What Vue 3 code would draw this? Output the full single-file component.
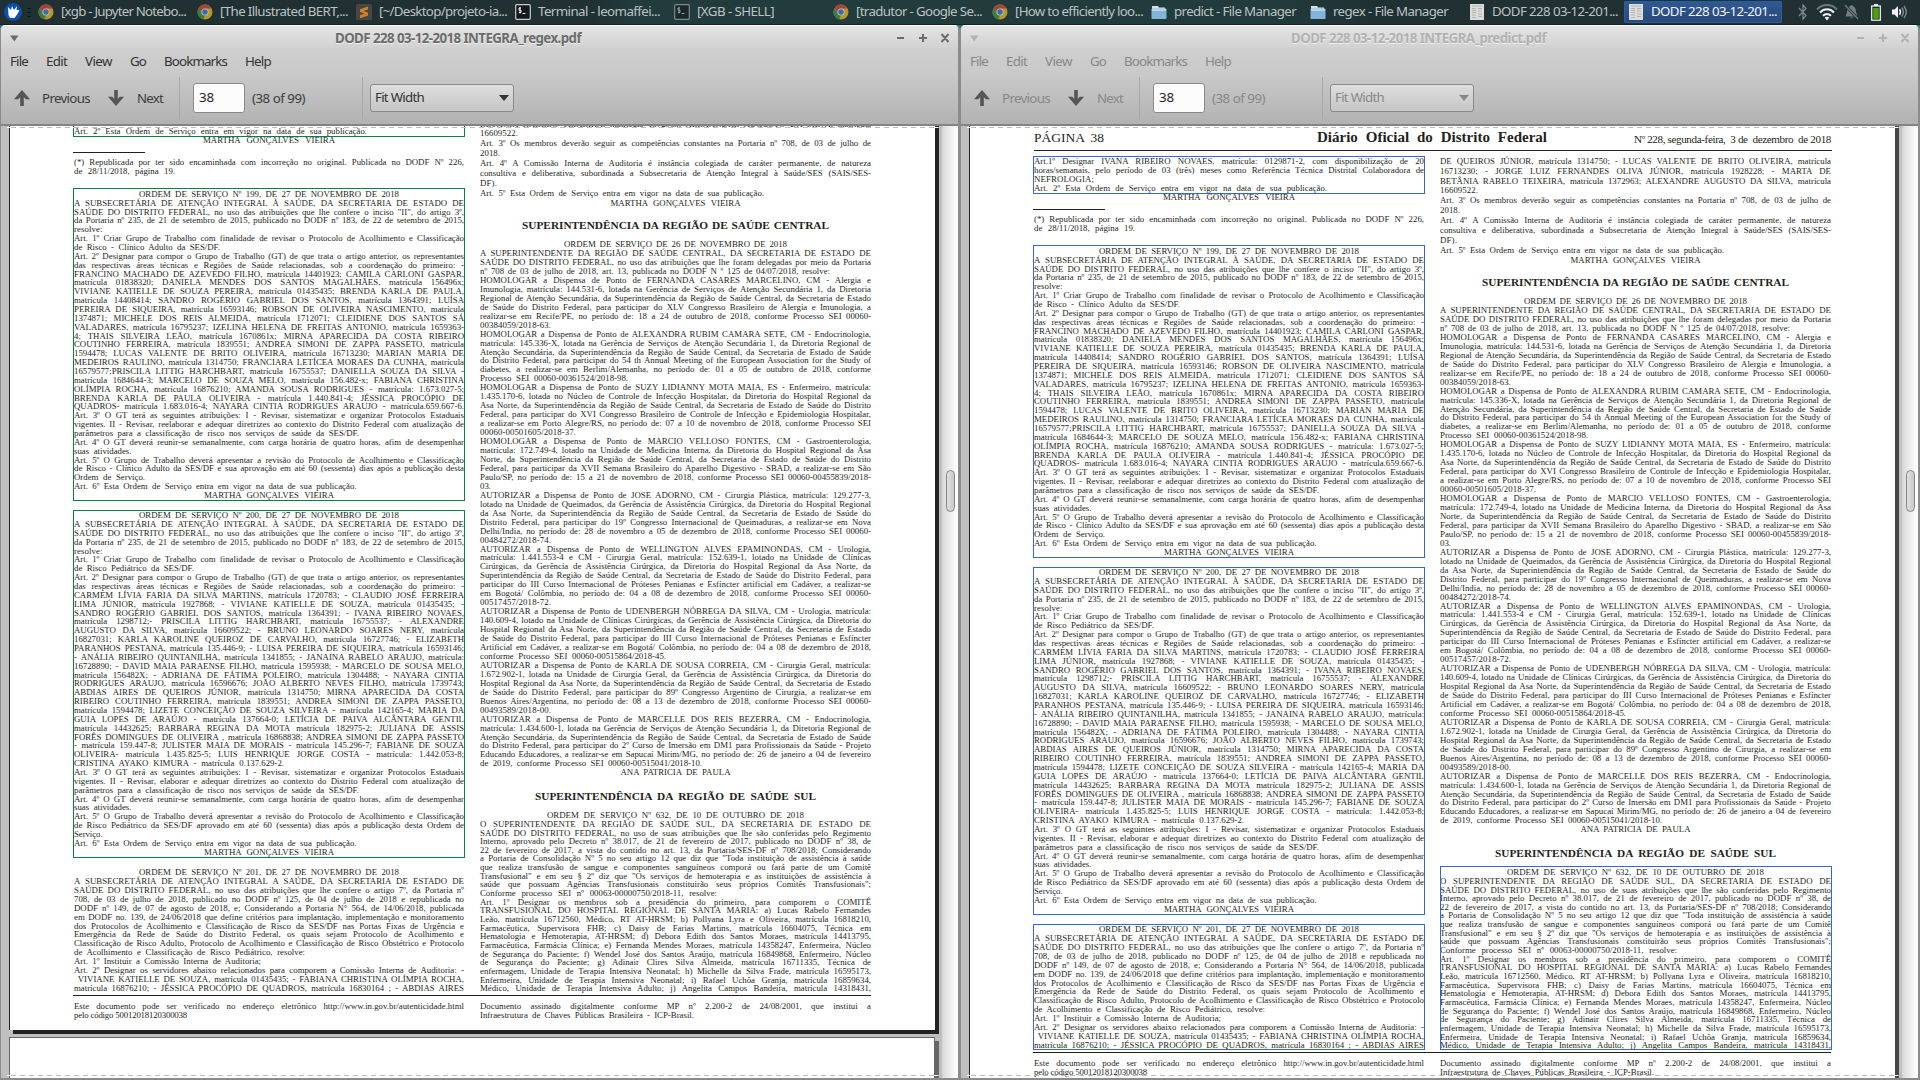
<script setup>
const tasks = [
  { icon: 'chrome', label: '[xgb - Jupyter Notebo...', w: 125 },
  { icon: 'chrome', label: '[The Illustrated BERT,...', w: 128 },
  { icon: 'sublime', label: '[~/Desktop/projeto-ia...', w: 128 },
  { icon: 'term', label: 'Terminal - leomaffei...', w: 122 },
  { icon: 'termdim', label: '[XGB - SHELL]', w: 77 },
  { icon: 'chrome', label: '[tradutor - Google Se...', w: 126 },
  { icon: 'chrome', label: '[How to efficiently loo...', w: 128 },
  { icon: 'folder', label: 'predict - File Manager', w: 122 },
  { icon: 'folder', label: 'regex - File Manager', w: 115 },
  { icon: 'pdf', label: 'DODF 228 03-12-201...', w: 126 },
  { icon: 'pdf', label: 'DODF 228 03-12-201...', w: 126, active: true },
]
const menus = [['File', 18], ['Edit', 21], ['View', 27], ['Go', 16], ['Bookmarks', 63], ['Help', 26]]
const windows = [
  { id: 'regex', title: 'DODF 228 03-12-2018 INTEGRA_regex.pdf', tw: 246 },
  { id: 'predict', title: 'DODF 228 03-12-2018 INTEGRA_predict.pdf', tw: 255 },
]

// A line may start with "width|" (last line of a paragraph) or "^width|" (centred line).
const parse = (s) => {
  const m = s.match(/^(\^?)([\d.]+)\|(.*)$/)
  return m ? { c: !!m[1], w: +m[2], t: m[3] } : { c: false, w: null, t: s }
}
const block = (h, pad, lh, text, o = {}) => ({ h, pad, lh, lines: text.trim().split('\n').map(parse), ...o })

const left = [
  block(38, 0.6, 9, `
Art.1º Designar IVANA RIBEIRO NOVAES, matrícula: 0129871-2, com disponibilização de 20
horas/semanais, pelo período de 03 (três) meses como Referência Técnica Distrital Colaboradora de
60|NEFROLOGIA;
293|Art. 2º Esta Ordem de Serviço entra em vigor na data de sua publicação.`, { gap: 5, box: 'both' }),
  block(15, -1, 9, `^132|MARTHA GONÇALVES VIEIRA`),
  block(36, 5.6, 9, `
(*) Republicada por ter sido encaminhada com incorreção no original. Publicada no DODF Nº 226,
101|de 28/11/2018, página 19.`, { rule: true }),
  block(313, 1.8, 8.868, `
^260|ORDEM DE SERVIÇO Nº 199, DE 27 DE NOVEMBRO DE 2018
A SUBSECRETÁRIA DE ATENÇÃO INTEGRAL À SAÚDE, DA SECRETARIA DE ESTADO DE
SAÚDE DO DISTRITO FEDERAL, no uso das atribuições que lhe confere o inciso "II", do artigo 3º,
da Portaria nº 235, de 21 de setembro de 2015, publicado no DODF nº 183, de 22 de setembro de 2015,
28.5|resolve:
Art. 1º Criar Grupo de Trabalho com finalidade de revisar o Protocolo de Acolhimento e Classificação
146|de Risco - Clínico Adulto da SES/DF.
Art. 2º Designar para compor o Grupo de Trabalho (GT) de que trata o artigo anterior, os representantes
das respectivas áreas técnicas e Regiões de Saúde relacionadas, sob a coordenação do primeiro: -
FRANCINO MACHADO DE AZEVEDO FILHO, matrícula 14401923; CAMILA CARLONI GASPAR,
matrícula 01838320; DANIELA MENDES DOS SANTOS MAGALHÃES, matrícula 156496x;
VIVIANE KATIELLE DE SOUZA PEREIRA, matrícula 01435435; BRENDA KARLA DE PAULA,
matrícula 14408414; SANDRO ROGÉRIO GABRIEL DOS SANTOS, matrícula 1364391; LUÍSA
PEREIRA DE SIQUEIRA, matrícula 16593146; ROBSON DE OLIVEIRA NASCIMENTO, matrícula
1374871; MICHELE DOS REIS ALMEIDA, matrícula 1712071; CLEIDIENE DOS SANTOS SÁ
VALADARES, matrícula 16795237; IZELINA HELENA DE FREITAS ANTONIO, matrícula 1659363-
4; THAIS SILVEIRA LEÃO, matrícula 1670861x; MIRNA APARECIDA DA COSTA RIBEIRO
COUTINHO FERREIRA, matrícula 1839551; ANDREA SIMONI DE ZAPPA PASSETO, matrícula
1594478; LUCAS VALENTE DE BRITO OLIVEIRA, matrícula 16713230; MARIAN MARIA DE
MEDEIROS RAULINO, matrícula 1314750; FRANCIARA LETÍCEA MORAES DA CUNHA, matrícula
16579577;PRISCILA LITTIG HARCHBART, matrícula 16755537; DANIELLA SOUZA DA SILVA -
matrícula 1684644-3; MARCELO DE SOUZA MELO, matrícula 156.482-x; FABIANA CHRISTINA
OLÍMPIA ROCHA, matrícula 16876210; AMANDA SOUSA RODRIGUES - matrícula: 1.673.027-5;
BRENDA KARLA DE PAULA OLIVEIRA - matrícula 1.440.841-4; JÉSSICA PROCÓPIO DE
QUADROS- matrícula 1.683.016-4; NAYARA CINTIA RODRIGUES ARAUJO - matrícula.659.667-6.
Art. 3º O GT terá as seguintes atribuições: I - Revisar, sistematizar e organizar Protocolos Estaduais
vigentes. II - Revisar, reelaborar e adequar diretrizes ao contexto do Distrito Federal com atualização de
285|parâmetros para a classificação de risco nos serviços de saúde da SES/DF.
Art. 4º O GT deverá reunir-se semanalmente, com carga horária de quatro horas, afim de desempenhar
57.5|suas atividades.
Art. 5º O Grupo de Trabalho deverá apresentar a revisão do Protocolo de Acolhimento e Classificação
de Risco - Clínico Adulto da SES/DF e sua aprovação em até 60 (sessenta) dias após a publicação desta
71|Ordem de Serviço.
282.5|Art. 6º Esta Ordem de Serviço entra em vigor na data de sua publicação.
^130|MARTHA GONÇALVES VIEIRA`, { box: 'both' }),
  block(348, 1.1, 8.868, `
^260|ORDEM DE SERVIÇO Nº 200, DE 27 DE NOVEMBRO DE 2018
A SUBSECRETÁRIA DE ATENÇÃO INTEGRAL À SAÚDE, DA SECRETARIA DE ESTADO DE
SAÚDE DO DISTRITO FEDERAL, no uso das atribuições que lhe confere o inciso "II", do artigo 3º,
da Portaria nº 235, de 21 de setembro de 2015, publicado no DODF nº 183, de 22 de setembro de 2015,
28.5|resolve:
Art. 1º Criar Grupo de Trabalho com finalidade de revisar o Protocolo de Acolhimento e Classificação
120|de Risco Pediátrico da SES/DF.
Art. 2º Designar para compor o Grupo de Trabalho (GT) de que trata o artigo anterior, os representantes
das respectivas áreas técnicas e Regiões de Saúde relacionadas, sob a coordenação do primeiro: -
CARMEM LÍVIA FARIA DA SILVA MARTINS, matrícula 1720783; - CLAUDIO JOSÉ FERREIRA
LIMA JÚNIOR, matrícula 1927868; - VIVIANE KATIELLE DE SOUZA, matrícula 01435435; -
SANDRO ROGÉRIO GABRIEL DOS SANTOS, matrícula 1364391; - IVANA RIBEIRO NOVAES,
matrícula 1298712;- PRISCILA LITTIG HARCHBART, matrícula 16755537; - ALEXANDRE
AUGUSTO DA SILVA, matrícula 16609522; - BRUNO LEONARDO SOARES NERY, matrícula
16827031; KARLA KAROLINE QUEIROZ DE CARVALHO, matrícula 16727746; - ELIZABETH
PARANHOS PESTANA, matrícula 135.446-9; - LUISA PEREIRA DE SIQUEIRA, matrícula 16593146;
- ANÁLIA RIBEIRO QUINTANILHA, matrícula 1341855; - JANAINA RABELO ARAUJO, matrícula:
16728890; - DAVID MAIA PARAENSE FILHO, matrícula 1595938; - MARCELO DE SOUSA MELO,
matrícula 156482X; - ADRIANA DE FÁTIMA POLEIRO, matrícula 1304488; - NAYARA CINTIA
RODRIGUES ARAUJO, matrícula 16596676; JOÃO ALBERTO NEVES FILHO, matrícula 1739743;
ABDIAS AIRES DE QUEIROS JÚNIOR, matrícula 1314750; MIRNA APARECIDA DA COSTA
RIBEIRO COUTINHO FERREIRA, matrícula 1839551; ANDREA SIMONI DE ZAPPA PASSETO,
matrícula 1594478; LIZETE CONCEIÇÃO DE SOUZA SILVEIRA - matrícula 142165-4; MARIA DA
GUIA LOPES DE ARAÚJO - matrícula 137664-0; LETÍCIA DE PAIVA ALCÂNTARA GENTIL
matrícula 14432625; BARBARA REGINA DA MOTA matrícula 182975-2; JULIANA DE ASSIS
FORÊS DOMINGUES DE OLIVEIRA , matrícula 16868838; ANDREA SIMONI DE ZAPPA PASSETO
- matrícula 159.447-8; JULISTER MAIA DE MORAIS - matrícula 145.296-7; FABIANE DE SOUZA
OLIVEIRA- matrícula 1.435.825-5; LUIS HENRIQUE JORGE COSTA - matrícula: 1.442.053-8;
210|CRISTINA AYAKO KIMURA - matrícula 0.137.629-2.
Art. 3º O GT terá as seguintes atribuições: I - Revisar, sistematizar e organizar Protocolos Estaduais
vigentes. II - Revisar, elaborar e adequar diretrizes ao contexto do Distrito Federal com atualização de
285|parâmetros para a classificação de risco nos serviços de saúde da SES/DF.
Art. 4º O GT deverá reunir-se semanalmente, com carga horária de quatro horas, afim de desempenhar
57.5|suas atividades.
Art. 5º O Grupo de Trabalho deverá apresentar a revisão do Protocolo de Acolhimento e Classificação
de Risco Pediátrico da SES/DF aprovado em até 60 (sessenta) dias após a publicação desta Ordem de
28.5|Serviço.
282.5|Art. 6º Esta Ordem de Serviço entra em vigor na data de sua publicação.
^130|MARTHA GONÇALVES VIEIRA`, { gap: 9, box: 'both' }),
  block(126, 1.1, 8.92, `
^260|ORDEM DE SERVIÇO Nº 201, DE 27 DE NOVEMBRO DE 2018
A SUBSECRETÁRIA DE ATENÇÃO INTEGRAL A SAÚDE, DA SECRETARIA DE ESTADO DE
SAÚDE DO DISTRITO FEDERAL, no uso das atribuições que lhe confere o artigo 7º, da Portaria nº
708, de 03 de julho de 2018, publicado no DODF nº 125, de 04 de julho de 2018 e republicada no
DODF nº 149, de 07 de agosto de 2018, e; Considerando a Portaria N° 564, de 14/06/2018, publicada
em DODF no. 139, de 24/06/2018 que define critérios para implantação, implementação e monitoramento
dos Protocolos de Acolhimento e Classificação de Risco da SES/DF nas Portas Fixas de Urgência e
Emergência da Rede de Saúde do Distrito Federal, os quais sejam Protocolo de Acolhimento e
Classificação de Risco Adulto, Protocolo de Acolhimento e Classificação de Risco Obstétrico e Protocolo
231|de Acolhimento e Classificação de Risco Pediátrico, resolve:
187|Art. 1º Instituir a Comissão Interna de Auditoria;
Art. 2º Designar os servidores abaixo relacionados para comporem a Comissão Interna de Auditoria: -
\u00a0VIVIANE KATIELLE DE SOUZA, matrícula 01435435; - FABIANA CHRISTINA OLÍMPIA ROCHA,
matrícula 16876210; - JÉSSICA PROCÓPIO DE QUADROS, matrícula 16830164 ; - ABDIAS AIRES`, { gap: 9, box: 'predict' }),
]

const right = [
  block(114, 5.7, 9.93, `
DE QUEIROS JÚNIOR, matrícula 1314750; - LUCAS VALENTE DE BRITO OLIVEIRA, matrícula
16713230; - JORGE LUIZ FERNANDES OLIVA JÚNIOR, matrícula 1928228; - MARTA DE
BETÂNIA RABELO TEIXEIRA, matrícula 1372963; ALEXANDRE AUGUSTO DA SILVA, matrícula
38|16609522.
Art. 3º Os membros deverão seguir as competências constantes na Portaria nº 708, de 03 de julho de
20|2018.
Art. 4º A Comissão Interna de Auditoria é instância colegiada de caráter permanente, de natureza
consultiva e deliberativa, subordinada a Subsecretaria de Atenção Integral à Saúde/SES (SAIS/SES-
17|DF).
284|Art. 5º Esta Ordem de Serviço entra em vigor na data de sua publicação.
^130|MARTHA GONÇALVES VIEIRA`),
  block(31, 9.5, 14, `^307|SUPERINTENDÊNCIA DA REGIÃO DE SAÚDE CENTRAL`, { head: true }),
  block(538, 1.1, 8.966, `
^223|ORDEM DE SERVIÇO DE 26 DE NOVEMBRO DE 2018
A SUPERINTENDENTE DA REGIÃO DE SAÚDE CENTRAL, DA SECRETARIA DE ESTADO DE
SAÚDE DO DISTRITO FEDERAL, no uso das atribuições que lhe foram delegadas por meio da Portaria
350|nº 708 de 03 de julho de 2018, art. 13, publicada no DODF N º 125 de 04/07/2018, resolve:
HOMOLOGAR a Dispensa de Ponto de FERNANDA CASARES MARCELINO, CM - Alergia e
Imunologia, matrícula: 144.531-6, lotada na Gerência de Serviços de Atenção Secundária 1, da Diretoria
Regional de Atenção Secundária, da Superintendência da Região de Saúde Central, da Secretaria de Estado
de Saúde do Distrito Federal, para participar do XLV Congresso Brasileiro de Alergia e Imunologia, a
realizar-se em Recife/PE, no período de: 18 a 24 de outubro de 2018, conforme Processo SEI 00060-
71|00384059/2018-63.
HOMOLOGAR a Dispensa de Ponto de ALEXANDRA RUBIM CAMARA SETE, CM - Endocrinologia,
matrícula: 145.336-X, lotada na Gerência de Serviços de Atenção Secundária 1, da Diretoria Regional de
Atenção Secundária, da Superintendência da Região de Saúde Central, da Secretaria de Estado de Saúde
do Distrito Federal, para participar do 54 th Annual Meeting of the European Association for the Study of
diabetes, a realizar-se em Berlim/Alemanha, no período de: 01 a 05 de outubro de 2018, conforme
148|Processo SEI 00060-00361524/2018-98.
HOMOLOGAR a Dispensa de Ponto de SUZY LIDIANNY MOTA MAIA, ES - Enfermeiro, matrícula:
1.435.170-6, lotada no Núcleo de Controle de Infecção Hospitalar, da Diretoria do Hospital Regional da
Asa Norte, da Superintendência da Região de Saúde Central, da Secretaria de Estado de Saúde do Distrito
Federal, para participar do XVI Congresso Brasileiro de Controle de Infecção e Epidemiologia Hospitalar,
a realizar-se em Porto Alegre/RS, no período de: 07 a 10 de novembro de 2018, conforme Processo SEI
96|00060-00501605/2018-37.
HOMOLOGAR a Dispensa de Ponto de MARCIO VELLOSO FONTES, CM - Gastroenterologia,
matrícula: 172.749-4, lotado na Unidade de Medicina Interna, da Diretoria do Hospital Regional da Asa
Norte, da Superintendência da Região de Saúde Central, da Secretaria de Estado de Saúde do Distrito
Federal, para participar da XVII Semana Brasileiro do Aparelho Digestivo - SBAD, a realizar-se em São
Paulo/SP, no período de: 15 a 21 de novembro de 2018, conforme Processo SEI 00060-00455839/2018-
11|03.
AUTORIZAR a Dispensa de Ponto de JOSE ADORNO, CM - Cirurgia Plástica, matrícula: 129.277-3,
lotado na Unidade de Queimados, da Gerência de Assistência Cirúrgica, da Diretoria do Hospital Regional
da Asa Norte, da Superintendência da Região de Saúde Central, da Secretaria de Estado de Saúde do
Distrito Federal, para participar do 19º Congresso Internacional de Queimaduras, a realizar-se em Nova
Delhi/India, no período de: 28 de novembro a 05 de dezembro de 2018, conforme Processo SEI 00060-
71|00484272/2018-74.
AUTORIZAR a Dispensa de Ponto de WELLINGTON ALVES EPAMINONDAS, CM - Urologia,
matrícula: 1.441.553-4 e CM - Cirurgia Geral, matrícula: 152.639-1, lotado na Unidade de Clínicas
Cirúrgicas, da Gerência de Assistência Cirúrgica, da Diretoria do Hospital Regional da Asa Norte, da
Superintendência da Região de Saúde Central, da Secretaria de Estado de Saúde do Distrito Federal, para
participar do III Curso Internacional de Próteses Penianas e Esfíncter artificial em Cadáver, a realizar-se
em Bogotá/ Colômbia, no período de: 04 a 08 de dezembro de 2018, conforme Processo SEI 00060-
71|00517457/2018-72.
AUTORIZAR a Dispensa de Ponto de UDENBERGH NÓBREGA DA SILVA, CM - Urologia, matrícula:
140.609-4, lotado na Unidade de Clínicas Cirúrgicas, da Gerência de Assistência Cirúrgica, da Diretoria do
Hospital Regional da Asa Norte, da Superintendência da Região de Saúde Central, da Secretaria de Estado
de Saúde do Distrito Federal, para participar do III Curso Internacional de Próteses Penianas e Esfíncter
Artificial em Cadáver, a realizar-se em Bogotá/ Colômbia, no período de: 04 a 08 de dezembro de 2018,
186|conforme Processo SEI 00060-00515864/2018-45.
AUTORIZAR a Dispensa de Ponto de KARLA DE SOUSA CORREIA, CM - Cirurgia Geral, matrícula:
1.672.902-1, lotada na Unidade de Cirurgia Geral, da Gerência de Assistência Cirúrgica, da Diretoria do
Hospital Regional da Asa Norte, da Superintendência da Região de Saúde Central, da Secretaria de Estado
de Saúde do Distrito Federal, para participar do 89º Congresso Argentino de Cirurgia, a realizar-se em
Buenos Aires/Argentina, no período de: 08 a 13 de dezembro de 2018, conforme Processo SEI 00060-
71|00493589/2018-00.
AUTORIZAR a Dispensa de Ponto de MARCELLE DOS REIS BEZERRA, CM - Endocrinologia,
matrícula: 1.434.600-1, lotada na Gerência de Serviços de Atenção Secundária 1, da Diretoria Regional de
Atenção Secundária, da Superintendência da Região de Saúde Central, da Secretaria de Estado de Saúde
do Distrito Federal, para participar do 2º Curso de Imersão em DM1 para Profissionais da Saúde - Projeto
Educando Educadores, a realizar-se em Sapucaí Mirim/MG, no período de: 26 de janeiro a 04 de fevereiro
222|de 2019, conforme Processo SEI 00060-00515041/2018-10.
^110|ANA PATRICIA DE PAULA`),
  block(32, 12, 14, `^281|SUPERINTENDÊNCIA DA REGIÃO DE SAÚDE SUL`, { head: true }),
  block(184, 2.2, 8.67, `
^257|ORDEM DE SERVIÇO Nº 632, DE 10 DE OUTUBRO DE 2018
O SUPERINTENDENTE DA REGIÃO DE SAÚDE SUL, DA SECRETARIA DE ESTADO DE
SAÚDE DO DISTRITO FEDERAL, no uso de suas atribuições que lhe são conferidas pelo Regimento
Interno, aprovado pelo Decreto nº 38.017, de 21 de fevereiro de 2017, publicado no DODF nº 38, de
22 de fevereiro de 2017, a vista do contido no art. 13, da Portaria/SES-DF nº 708/2018; Considerando
a Portaria de Consolidação Nº 5 no seu artigo 12 que diz que "Toda instituição de assistência à saúde
que realiza transfusão de sangue e componentes sanguíneos comporá ou fará parte de um Comitê
Transfusional" e em seu § 2º diz que "Os serviços de hemoterapia e as instituições de assistência à
saúde que possuam Agências Transfusionais constituirão seus próprios Comitês Transfusionais";
237|Conforme processo SEI nº 00063-00000750/2018-11, resolve:
Art. 1º Designar os membros sob a presidência do primeiro, para comporem o COMITÊ
TRANSFUSIONAL DO HOSPITAL REGIONAL DE SANTA MARIA: a) Lucas Rabelo Fernandes
Leão, matrícula 16712560, Médico, RT AT-HRSM; b) Pollyana Lyra e Oliveira, matrícula 16818210,
Farmacêutica, Supervisora FHB; c) Daisy de Farias Martins, matrícula 16604075, Técnica em
Hematologia e Hemoterapia, AT-HRSM; d) Debora Edith dos Santos Moraes, matrícula 14413795,
Farmacêutica, Farmácia Clínica; e) Fernanda Mendes Moraes, matrícula 14358247, Enfermeira, Núcleo
de Segurança do Paciente; f) Wendel José dos Santos Araújo, matrícula 16849868, Enfermeiro, Núcleo
de Segurança do Paciente; g) Adinair Clires Silva Almeida, matrícula 16711335, Técnica de
enfermagem, Unidade de Terapia Intensiva Neonatal; h) Michelle da Silva Frade, matrícula 16595173,
Enfermeira, Unidade de Terapia Intensiva Neonatal; i) Rafael Uchôa Granja, matrícula 16859634,
Médico, Unidade de Terapia Intensiva Adulto; j) Angelita Campos Bandeira, matrícula 14318431,`, { box: 'predict' }),
]

const footer = [
  block(20, 0, 9, `
Este documento pode ser verificado no endereço eletrônico http://www.in.gov.br/autenticidade.html
113|pelo código 50012018120300038`),
  block(20, 0, 9, `
Documento assinado digitalmente conforme MP nº 2.200-2 de 24/08/2001, que institui a
214|Infraestrutura de Chaves Públicas Brasileira - ICP-Brasil.`),
]
const columns = [left, right]
const boxed = (b, id) => b.box === 'both' || b.box === id

// Sets a line to its measure: the spaces stretch, and the letters close up when it is too long.
const fit = (el) => {
  const range = document.createRange()
  range.selectNodeContents(el)
  el.style.textAlignLast = 'left'
  const over = range.getBoundingClientRect().width - el.getBoundingClientRect().width
  el.style.textAlignLast = ''
  const n = el.textContent.length
  if (over > 0 || !el.textContent.trim().includes(' ')) el.style.letterSpacing = `${-over / n}px`
}
const vFit = { mounted: (el) => fit(el) }
</script>

<template>
  <div class="desktop">
    <header class="panel">
      <svg class="mouse" viewBox="0 0 18 26">
        <ellipse cx="9" cy="13" rx="9" ry="9" fill="#0b4fb3" />
        <path d="M4 8l3 3 1-4 2 4 3-4-.5 4 3 0-2 4-3 4H6l-1.500-3z" fill="#fff" />
      </svg>
      <span class="grip"><i></i><i></i><i></i></span>
      <div v-for="(t, i) in tasks" :key="i" class="task" :class="{ active: t.active }">
        <svg v-if="t.icon === 'chrome'" viewBox="0 0 16 16" class="dim">
          <circle cx="8" cy="8" r="7.500" fill="#d5a823" />
          <path d="M1.500 4.200A7.500 7.500 0 0 1 14.600 4.500H8L4.700 9z" fill="#b8483c" />
          <path d="M1.500 4.200L5 10l3 1.500-1.700 3.800A7.500 7.500 0 0 1 1.500 4.200z" fill="#3c8a4c" />
          <circle cx="8" cy="8" r="3.600" fill="#d8dcd8" /><circle cx="8" cy="8" r="2.700" fill="#4076b8" />
        </svg>
        <svg v-else-if="t.icon === 'sublime'" viewBox="0 0 16 16">
          <rect width="16" height="16" rx="1.500" fill="#474642" />
          <path d="M12 2.500v3L7.500 7l4.500 1.500v3l-8 2.700v-3l4.500-1.600L4 8V5.200z" fill="#cf8228" />
        </svg>
        <svg v-else-if="t.icon === 'term' || t.icon === 'termdim'" viewBox="0 0 16 16" :class="{ faint: t.icon === 'termdim' }">
          <rect x=".7" y=".7" width="14.600" height="14.600" rx="1" fill="#15191a" stroke="#c8cccc" stroke-width="1.200" />
          <path d="M6 4H4v2.200h2V8.500H3.800M5 3v6.500M7.500 9.500h3" fill="none" stroke="#eee" stroke-width="1" />
        </svg>
        <svg v-else-if="t.icon === 'folder'" viewBox="0 0 16 16">
          <path d="M1 2h6l1 1.500h6V8H1z" fill="#d9e0e4" />
          <rect x=".5" y="4.500" width="15" height="10.500" rx=".8" fill="#82b4da" />
          <path d="M1 5h14v2H1z" fill="#b5d3ea" />
        </svg>
        <svg v-else viewBox="0 0 16 16">
          <path d="M1 0h14v16H1z" fill="#dcdcda" />
          <path d="M3 2h10M3 4.500h4M9 4.500h4M3 6.500h4M3 8.500h4M9 7h4M3 11h4M9 10h4M9 12.500h4M3 13.500h4" stroke="#aaa" stroke-width=".8" />
        </svg>
        <span v-fit class="tlabel" :style="{ width: t.w + 'px' }">{{ t.label }}</span>
      </div>
      <div class="tray">
        <svg width="10" height="18" viewBox="0 0 10 18"><path d="M1 5l7 7.500L5 16V2l3 3.500L1 13" fill="none" stroke="#7e8889" stroke-width="1.300" /></svg>
        <svg width="22" height="18" viewBox="0 0 22 18">
          <path d="M1 6.500C6.500.5 15.500.5 21 6.500" fill="none" stroke="#717c7d" stroke-width="2" />
          <path d="M4 9.500c4-4.200 10-4.200 14 0M7 12.700c2.400-2.400 5.600-2.400 8 0" fill="none" stroke="#eef0f0" stroke-width="2" />
          <path d="M8.600 14.500q2.400-1.500 4.800 0L11 17.500z" fill="#eef0f0" />
        </svg>
        <svg width="15" height="16" viewBox="0 0 15 16">
          <path d="M7.500 1q1 0 1 1Q12 3 12 8l1.500 4.500h-12L3 8q0-5 3.500-6 0-1 1-1zM6 13.500h3q-1.500 2-3 0z" fill="#747e7f" />
          <path d="M1 1l13 14" stroke="#233031" stroke-width="2.600" /><path d="M1 1l13 14" stroke="#747e7f" stroke-width="1.200" />
        </svg>
        <svg width="10" height="17" viewBox="0 0 10 17">
          <rect x="3" y="0" width="4" height="2.500" fill="#eee" /><rect x=".7" y="2" width="8.600" height="14.200" fill="#1c2526" stroke="#eee" stroke-width="1.300" />
          <rect x="2.200" y="4" width="5.600" height="10.800" fill="#4ea106" />
        </svg>
        <svg width="16" height="14" viewBox="0 0 16 14">
          <path d="M0 4.500h2.500L6 1v12L2.500 9.500H0z" fill="#f2f4f4" />
          <path d="M7.500 4.200q2 2.800 0 5.600" fill="none" stroke="#f2f4f4" stroke-width="1.500" />
          <path d="M9.800 2.500q3.200 4.500 0 9M12 .8q4.500 6.200 0 12.400" fill="none" stroke="#849092" stroke-width="1.300" />
        </svg>
      </div>
    </header>

    <main class="windows">
      <section v-for="w in windows" :key="w.id" class="window" :class="w.id">
        <div class="chrome">
          <div class="titlebar">
            <svg width="9" height="7" viewBox="0 0 9 7"><path d="M0 .5h8.500L4.300 6.500z" fill="currentColor" /></svg>
            <b v-fit class="title" :style="{ width: w.tw + 'px' }">{{ w.title }}</b>
            <svg class="ctl" width="54" height="10" viewBox="0 0 54 10">
              <path d="M1 5h7M23 5h8M27 1v8M45.500 1l7 8M52.500 1l-7 8" fill="none" stroke="currentColor" stroke-width="2" />
            </svg>
          </div>
          <nav class="menu"><span v-for="m in menus" :key="m[0]" v-fit :style="{ width: m[1] + 'px' }">{{ m[0] }}</span></nav>
          <div class="toolbar">
            <svg class="arrow" width="18" height="16" viewBox="0 0 18 16"><path d="M9 0l8 9.200h-4.300L10.800 7v9H7.200V7L5.300 9.200H1z" fill="#555" /></svg>
            <span v-fit class="prev">Previous</span>
            <svg class="arrow two" width="18" height="16" viewBox="0 0 18 16"><path d="M9 16l8-9.200h-4.300L10.800 9V0H7.200v9L5.300 6.800H1z" fill="#555" /></svg>
            <span v-fit class="next">Next</span>
            <i class="sep"></i>
            <span class="pageno">38</span>
            <span v-fit class="of">(38 of 99)</span>
            <i class="sep second"></i>
            <span class="zoom"><span v-fit>Fit Width</span><svg width="10" height="6" viewBox="0 0 10 6"><path d="M0 0h10L5 6z" fill="currentColor" /></svg></span>
          </div>
        </div>
        <div class="view">
          <div class="doc">
            <article class="page">
              <div class="pagehead">
                <span v-fit class="pg">PÁGINA 38</span>
                <b v-fit>Diário Oficial do Distrito Federal</b>
                <span v-fit class="date">Nº 228, segunda-feira,&nbsp; 3 de&nbsp; dezembro&nbsp; de 2018</span>
              </div>
              <div class="cols">
                <div v-for="(c, ci) in columns" :key="ci" class="col">
                  <div
                    v-for="(b, bi) in c"
                    :key="bi"
                    class="block"
                    :class="{ boxed: boxed(b, w.id), head: b.head, ruled: b.rule }"
                    :style="{ height: b.h + 'px', marginTop: (b.gap || 0) + 'px', lineHeight: b.lh + 'px' }"
                  >
                    <div class="text" :style="{ marginTop: b.pad + 'px' }">
                      <p v-for="(l, li) in b.lines" :key="li" v-fit :class="{ center: l.c }" :style="{ width: l.w ? l.w + 'px' : null, height: b.lh + 'px' }">{{ l.t }}</p>
                    </div>
                  </div>
                </div>
              </div>
              <div class="foot">
                <div v-for="(b, bi) in footer" :key="bi" class="col"><p v-for="(l, li) in b.lines" :key="li" v-fit :style="{ width: l.w ? l.w + 'px' : null }">{{ l.t }}</p></div>
              </div>
            </article>
            <article class="page following"></article>
          </div>
          <aside class="scroll"><i></i></aside>
        </div>
      </section>
    </main>
  </div>
</template>

<style>
html, body { margin: 0; background: #0f7d80; overflow: hidden; }
</style>

<style scoped>
.desktop { width: 1920px; height: 1080px; overflow: hidden; display: flex; flex-direction: column; background: #0f7d80; font: 13.3px/18px "Noto Sans", "Open Sans", sans-serif; }
.panel { height: 25px; flex: none; display: flex; align-items: center; box-sizing: border-box; padding-left: 4px; background: linear-gradient(100deg, #203033 0 31%, #223b3c 33% 66%, #203033 72%); border-bottom: 1px solid #152022; }
.mouse { width: 18px; height: 26px; flex: none; }
.grip { width: 4px; margin: 0 4px 0 5px; display: flex; flex-direction: column; gap: 3px; }
.grip i { height: 1px; background: #111a1b; }
.task { width: 158px; height: 22px; margin-right: 1px; flex: none; box-sizing: border-box; padding-left: 4px; display: flex; align-items: center; color: #bcc3c3; border-radius: 2px; }
.task:first-of-type { margin-left: -1px; }
.task svg { width: 16px; height: 16px; flex: none; margin-right: 7px; }
.task .faint { opacity: .55; }
.task .dim { opacity: .85; }
.tlabel { white-space: nowrap; flex: none; margin-top: -2px; }
.task.active { background: linear-gradient(#2d5a94, #2a4779); box-shadow: inset 0 0 0 1px #2b5e9e; color: #f1f3f4; }
.tray { display: flex; align-items: center; margin-left: 15px; }
.tray svg { flex: none; }
.tray svg:nth-child(2) { margin-left: 8px; }
.tray svg:nth-child(3) { margin-left: 6px; }
.tray svg:nth-child(4) { margin-left: 12px; }
.tray svg:nth-child(5) { margin-left: 11px; }

.windows { display: flex; flex: 1; min-height: 0; }
.window { width: 960px; box-sizing: border-box; display: flex; flex-direction: column; border: 1px solid #8b8b8b; border-width: 0 2px 2px 1px; border-radius: 5px 5px 0 0; overflow: hidden; background: #c4c4c4; color: #3c3c3c; }
.chrome { height: 101px; flex: none; box-sizing: border-box; background: linear-gradient(#e4e4e4 0, #cdcdcd 28%, #cacaca 48%, #b2b2b2 100%); border-top: 1px solid #f8f8f8; border-bottom: 2px solid #858385; }
.titlebar { display: flex; align-items: center; height: 24px; padding-left: 9px; color: #6c6c6c; text-shadow: 0 1px 0 #eee; }
.title { white-space: nowrap; margin-left: 316px; }
.regex .ctl { margin-left: 315px; }
.predict .title { margin-left: 312px; }
.predict .ctl { margin-left: 310px; }
.menu { display: flex; gap: 18px; height: 22px; padding-left: 9px; line-height: 22px; color: #333; }
.menu span { white-space: nowrap; }
.toolbar { display: flex; align-items: center; height: 48px; padding: 2px 0 0 12px; color: #3c3c3c; }
.toolbar span { white-space: nowrap; flex: none; }
.prev { width: 48px; margin-left: 11px; }
.arrow.two { margin-left: 17px; }
.next { width: 26px; margin-left: 12px; }
.sep { width: 1px; height: 42px; background: #a8a8a8; margin-left: 16px; }
.pageno { width: 52px; height: 30px; margin-left: 13px; box-sizing: border-box; border: 1px solid #8a8a8a; border-radius: 3px; background: #fcfcfc; line-height: 27px; padding-left: 5px; color: #222; }
.of { width: 53px; margin-left: 7px; }
.sep.second { margin-left: 57px; }
.zoom { width: 144px; height: 28px; margin-left: 7px; box-sizing: border-box; border: 1px solid #8a8a8a; border-radius: 3px; background: linear-gradient(#dedede, #c6c6c6); display: flex; align-items: center; justify-content: space-between; padding: 0 4px; color: #333; }
.zoom span { width: 49px; margin-top: -2px; }
.predict .titlebar { color: #b2b2b2; }
.predict .menu, .predict .toolbar, .predict .zoom { color: #888; }

.view { flex: 1; min-height: 0; display: flex; position: relative; overflow: hidden; background: #c0c0c0; }
.view::before, .view::after { content: ""; position: absolute; left: 1px; width: 941px; height: 1px; top: 1px; z-index: 2; background: repeating-linear-gradient(90deg, #bcbcbc 0 5px, #fff 5px 9px); }
.view::after { top: auto; bottom: 2px; }
.doc { width: 941px; flex: none; padding-left: 8px; box-sizing: border-box; margin-top: -20px; }
.regex .doc { margin-top: -77px; }
.page { width: 926px; height: 981px; box-sizing: border-box; border-left: 1px solid #222; padding: 20px 0 0 64px; background: #fff; box-shadow: 4px 4px 0 #222; font-family: "Liberation Serif", "Times New Roman", serif; color: #231f20; }
.predict .page { box-shadow: 4px 4px 0 #454545; }
.page.following { height: 400px; margin-top: 7px; border: 1px solid #666; box-shadow: 4px 4px 0 #666; }
.pagehead { width: 798px; height: 25px; box-sizing: border-box; border-bottom: 1px solid #231f20; display: flex; align-items: flex-start; }
.pagehead > * { white-space: nowrap; text-align: justify; text-align-last: justify; line-height: 20px; }
.pg { width: 70px; font-size: 13.500px; padding-top: 2px; }
.pagehead b { width: 230px; font-size: 15px; margin-left: 213px; padding-top: 1px; }
.date { width: 197px; font-size: 11.100px; margin-left: 87px; padding-top: 3px; }
.cols { display: flex; gap: 16px; height: 901px; }
.col { width: 390px; font-size: 8.800px; }
.col + .col { width: 391px; }
.block { position: relative; box-sizing: border-box; display: flex; }
.text { width: 100%; }
p { margin: 0; white-space: nowrap; text-align: justify; text-align-last: justify; }
p.center { margin-left: auto; margin-right: auto; }
.head { font-weight: bold; font-size: 11.300px; }
.ruled::before { content: ""; position: absolute; left: -1px; top: 0; width: 72px; height: 1px; background: #231f20; }
.boxed::after { content: ""; position: absolute; inset: 0 -1px; border: 1px solid #068343; }
.col + .col .boxed::after { inset: 0 -1px 0 0; }
.predict .boxed::after { border-color: #3565d8; }
.foot { width: 798px; border-top: 1px solid #231f20; display: flex; gap: 16px; padding-top: 6px; line-height: 9px; margin-left: -1px; }
.foot .col:first-child { margin-left: 1px; }
.scroll { flex: 1; background: linear-gradient(90deg, #d8d8d8, #f2f2f2 60%, #fff); position: relative; }
.scroll i { position: absolute; left: 4px; top: 344px; width: 9px; height: 42px; box-sizing: border-box; border: 1px solid #858585; border-radius: 5px; background: linear-gradient(90deg, #e0e0e0, #c8c8c8); }
</style>
